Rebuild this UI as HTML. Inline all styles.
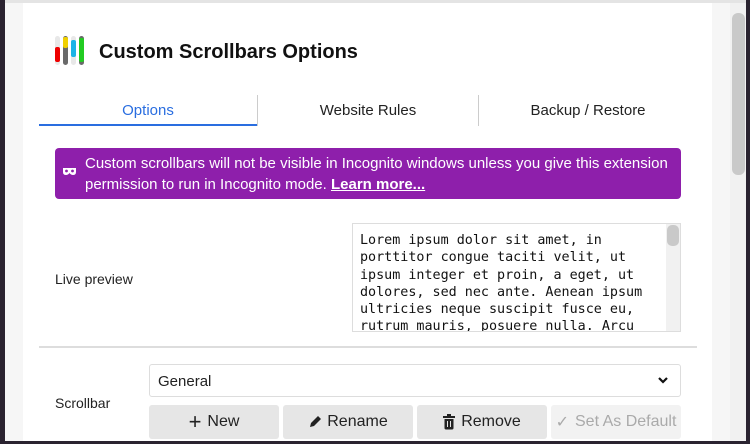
<!DOCTYPE html>
<html><head><meta charset="utf-8"><style>
*{box-sizing:border-box;margin:0;padding:0}
body{width:750px;height:444px;overflow:hidden;background:#2a2330;font-family:"Liberation Sans",sans-serif;position:relative}
.abs{position:absolute}
.page{left:5px;top:0;width:741px;height:441px;background:#f6f6f6;border-top:3px solid #e4e4e4}
.card{left:23px;top:3px;width:689px;height:438px;background:#fff}
.sb{left:730px;top:3px;width:16px;height:438px;background:#f1f1f1}
.thumb{left:732px;top:13px;width:13px;height:162px;background:#c9c9c9;border-radius:6px}
.tab{top:102px;font-size:15px;color:#222;text-align:center}
.btn{top:405px;height:34px;width:130px;background:#e6e6e6;border-radius:3px;font-size:16px;color:#222;display:flex;align-items:center;justify-content:center;gap:6px}
</style></head><body>
<div class="abs page"></div>
<div class="abs card"></div>
<div class="abs sb"></div><div class="abs thumb"></div>
<svg class="abs" style="left:53px;top:34px" width="32" height="34">
<rect x="2" y="2" width="5" height="29" rx="2.5" fill="#e8e8e8"/><rect x="2" y="13" width="5" height="15" rx="2" fill="#e00"/>
<rect x="10" y="2" width="5" height="29" rx="2.5" fill="#6a6a6a"/><rect x="10" y="3" width="5" height="11" rx="2" fill="#f0d000"/>
<rect x="18" y="2" width="5" height="29" rx="2.5" fill="#e8e8e8"/><rect x="18" y="6" width="5" height="17" rx="2" fill="#1bb3e6"/>
<rect x="26" y="2" width="5" height="29" rx="2.5" fill="#6a6a6a"/><rect x="26" y="4" width="5" height="24" rx="2" fill="#22cc22"/>
</svg>
<div class="abs" style="left:99px;top:41px;font-size:20px;font-weight:bold;color:#111">Custom Scrollbars Options</div>
<div class="abs tab" style="left:39px;width:218px;color:#2a6ee0">Options</div>
<div class="abs tab" style="left:258px;width:220px">Website Rules</div>
<div class="abs tab" style="left:478px;width:220px">Backup / Restore</div>
<div class="abs" style="left:39px;top:124px;width:218px;height:2px;background:#2a6ee0"></div>
<div class="abs" style="left:257px;top:95px;width:1px;height:31px;background:#ccc"></div>
<div class="abs" style="left:478px;top:95px;width:1px;height:31px;background:#ccc"></div>
<div class="abs" style="left:55px;top:148px;width:626px;height:51px;background:#8e1fab;border-radius:4px;color:#fff;font-size:15px;line-height:21px;padding:5px 0 0 30px">Custom scrollbars will not be visible in Incognito windows unless you give this extension<br>permission to run in Incognito mode. <b style="text-decoration:underline">Learn more...</b></div>
<svg class="abs" style="left:62px;top:167px" width="15" height="9"><path d="M1 1 H14 V5 Q14 8 11 8 Q9 8 7.5 6 Q6 8 4 8 Q1 8 1 5 Z" fill="#fff"/><circle cx="4.5" cy="4" r="1.4" fill="#8e1fab"/><circle cx="10.5" cy="4" r="1.4" fill="#8e1fab"/></svg>
<div class="abs" style="left:55px;top:271px;font-size:14px;color:#222">Live preview</div>
<div class="abs" style="left:352px;top:223px;width:329px;height:109px;border:1px solid #ddd;overflow:hidden;font-family:'DejaVu Sans Mono','Liberation Mono',monospace;font-size:13.4px;line-height:17.3px;color:#111;padding:8px 0 0 7px;white-space:pre">Lorem ipsum dolor sit amet, in
porttitor congue taciti velit, ut
ipsum integer et proin, a eget, ut
dolores, sed nec ante. Aenean ipsum
ultricies neque suscipit fusce eu,
rutrum mauris, posuere nulla. Arcu</div>
<div class="abs" style="left:666px;top:224px;width:14px;height:107px;background:#f1f1f1"></div>
<div class="abs" style="left:667px;top:225px;width:12px;height:21px;background:#c9c9c9;border-radius:5px"></div>
<div class="abs" style="left:39px;top:346px;width:658px;height:2px;background:#ddd"></div>
<div class="abs" style="left:55px;top:395px;font-size:14px;color:#222">Scrollbar</div>
<div class="abs" style="left:149px;top:364px;width:532px;height:33px;border:1px solid #ddd;border-radius:3px;font-size:15px;color:#222;padding:8px 0 0 8px">General<svg style="position:absolute;right:12px;top:12px" width="10" height="7"><path d="M1 1 L5 5 L9 1" stroke="#111" stroke-width="2.2" fill="none"/></svg></div>
<div class="abs btn" style="left:149px"><span style="font-size:22px;font-weight:300">+</span>New</div>
<div class="abs btn" style="left:283px"><svg width="13" height="14"><path d="M2 12 L3 8 L10 1 L13 4 L6 11 Z" fill="#222"/></svg>Rename</div>
<div class="abs btn" style="left:417px"><svg width="12" height="16"><rect x="0" y="2" width="12" height="2" fill="#222"/><rect x="4" y="0" width="4" height="2" fill="#222"/><path d="M1.5 5 H10.5 V14 Q10.5 15.5 9 15.5 H3 Q1.5 15.5 1.5 14 Z" fill="#222"/><rect x="4" y="7" width="1" height="6" fill="#e6e6e6"/><rect x="7" y="7" width="1" height="6" fill="#e6e6e6"/></svg>Remove</div>
<div class="abs btn" style="left:551px;background:#f2f2f2;color:#aaa"><span>&#10003;</span>Set As Default</div>
</body></html>
